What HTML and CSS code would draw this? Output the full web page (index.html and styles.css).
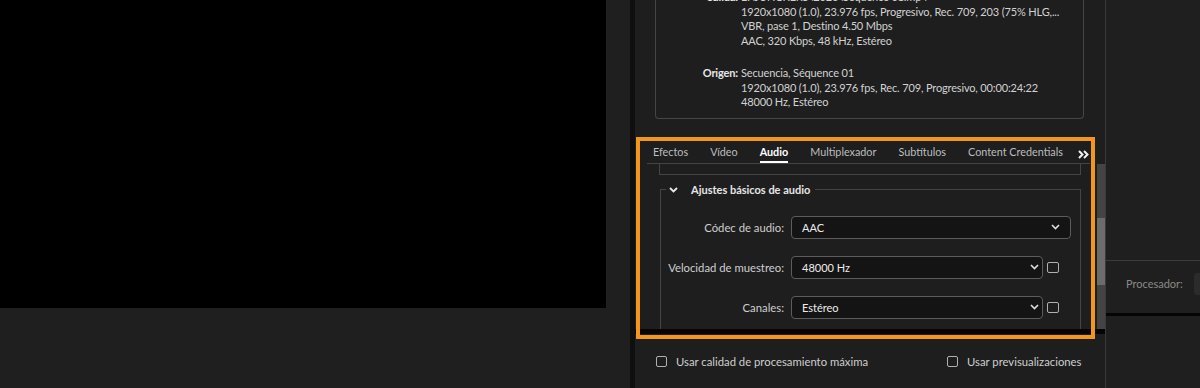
FILE: index.html
```html
<!DOCTYPE html>
<html lang="es">
<head>
  <meta charset="UTF-8">
  <title>Ajustes de exportación</title>
  <link rel="stylesheet" href="styles.css">
</head>
<body>
  <div class="viewer">
    <div class="video"></div>
  </div>
  <div class="gutter"></div>
  <div class="divider"></div>

  <div class="panel">
    <div class="summary">
      <div class="sum-group">
        <div class="sum-label">Salida:</div>
        <div class="sum-values">
          <p>E:\JUNCKERS\2026\Sequence 01.mp4</p>
          <p>1920x1080 (1.0), 23.976 fps, Progresivo, Rec. 709, 203 (75% HLG,...</p>
          <p>VBR, pase 1, Destino 4.50 Mbps</p>
          <p>AAC, 320 Kbps, 48 kHz, Estéreo</p>
        </div>
      </div>
      <div class="sum-group">
        <div class="sum-label">Origen:</div>
        <div class="sum-values">
          <p>Secuencia, Séquence 01</p>
          <p>1920x1080 (1.0), 23.976 fps, Rec. 709, Progresivo, 00:00:24:22</p>
          <p>48000 Hz, Estéreo</p>
        </div>
      </div>
    </div>

    <div class="tabs">
      <div class="tab"><span>Efectos</span></div>
      <div class="tab"><span>Vídeo</span></div>
      <div class="tab active"><span>Audio</span></div>
      <div class="tab"><span>Multiplexador</span></div>
      <div class="tab"><span>Subtítulos</span></div>
      <div class="tab"><span>Content Credentials</span></div>
      <div class="tab more">
        <svg width="11" height="9" viewBox="0 0 11 9"><path d="M1 1l3.5 3.5L1 8M6 1l3.5 3.5L6 8" fill="none" stroke="#f2f2f2" stroke-width="2"/></svg>
      </div>
    </div>

    <div class="scroll">
      <div class="scroll-content">
        <div class="prev-box"></div>
        <fieldset class="group">
          <legend>
            <svg class="chev" width="9" height="6" viewBox="0 0 9 6"><path d="M1 1l3.5 3.5L8 1" fill="none" stroke="#e8e8e8" stroke-width="1.8"/></svg>
            <span>Ajustes básicos de audio</span>
          </legend>
          <div class="rows">
            <div class="row">
              <label>Códec de audio:</label>
              <div class="field">
                <div class="select wide">
                  <span>AAC</span>
                  <svg width="9" height="6" viewBox="0 0 9 6"><path d="M1 1l3.5 3.5L8 1" fill="none" stroke="#e0e0e0" stroke-width="1.6"/></svg>
                </div>
              </div>
            </div>
            <div class="row">
              <label>Velocidad de muestreo:</label>
              <div class="field">
                <div class="select">
                  <span>48000 Hz</span>
                  <svg width="9" height="6" viewBox="0 0 9 6"><path d="M1 1l3.5 3.5L8 1" fill="none" stroke="#e0e0e0" stroke-width="1.6"/></svg>
                </div>
                <div class="check"></div>
              </div>
            </div>
            <div class="row">
              <label>Canales:</label>
              <div class="field">
                <div class="select">
                  <span>Estéreo</span>
                  <svg width="9" height="6" viewBox="0 0 9 6"><path d="M1 1l3.5 3.5L8 1" fill="none" stroke="#e0e0e0" stroke-width="1.6"/></svg>
                </div>
                <div class="check"></div>
              </div>
            </div>
          </div>
        </fieldset>
      </div>
      <div class="scrollbar">
        <div class="thumb"></div>
      </div>
    </div>

    <div class="separator"></div>

    <div class="options">
      <div class="option first"><div class="check"></div><span>Usar calidad de procesamiento máxima</span></div>
      <div class="option"><div class="check"></div><span>Usar previsualizaciones</span></div>
    </div>

    <div class="highlight"></div>
  </div>

  <div class="vline"></div>

  <div class="side">
    <div class="side-top"></div>
    <div class="side-row">
      <span>Procesador:</span>
      <div class="side-box"></div>
    </div>
    <div class="side-rest"></div>
  </div>
</body>
</html>
```

FILE: styles.css
```css
* {
  margin: 0;
  padding: 0;
  box-sizing: border-box;
}

body, html {
  width: 100%;
  height: 100%;
  overflow: hidden;
}

body {
  display: flex;
  background: #1f1f1f;
  font-family: Lato, "Noto Sans", sans-serif;
  font-size: 11px;
  color: #cfcfcf;
}

/* left monitor */
.viewer {
  width: 606px;
  flex: none;
}

.video {
  height: 308px;
  background: #000;
}

.gutter {
  width: 24px;
  flex: none;
}

.divider {
  width: 5px;
  flex: none;
  background: #0f0f0f;
}

/* export panel */
.panel {
  position: relative;
  width: 470px;
  flex: none;
  background: #1e1e1e;
  display: flex;
  flex-direction: column;
}

.summary {
  margin: -10px 0 0 20px;
  width: 429px;
  border: 1px solid #464646;
  border-top: none;
  border-radius: 0 0 4px 4px;
  padding-bottom: 8px;
  line-height: 14.5px;
  letter-spacing: -0.15px;
  color: #d2d2d2;
}

.sum-group {
  display: grid;
  grid-template-columns: 82px 1fr;
  column-gap: 3px;
}

.sum-group + .sum-group {
  margin-top: 18px;
}

.sum-label {
  text-align: right;
  font-weight: bold;
  color: #e6e6e6;
}

.sum-values p {
  white-space: nowrap;
}

.tabs {
  display: flex;
  gap: 22px;
  margin: 20px 15px 0 12px;
  padding-left: 6px;
  border-bottom: 1px solid #444;
  color: #bdbdbd;
  font-size: 10.8px;
}

.tab span {
  display: block;
  line-height: 16px;
  padding: 5px 0 1px;
  border-bottom: 2px solid transparent;
  white-space: nowrap;
}

.tab.active span {
  color: #fff;
  font-weight: bold;
  border-bottom-color: #fff;
}

.tab.more {
  margin-left: -7px;
  padding-top: 9px;
}

.scroll {
  display: flex;
  height: 166px;
  overflow: hidden;
}

.scroll-content {
  width: 462px;
  flex: none;
}

.prev-box {
  margin-left: 24px;
  width: 422px;
  height: 11px;
  border: 1px solid #444;
  border-top: none;
}

.group {
  margin: 7px 0 0 25px;
  width: 421px;
  min-width: 0;
  border: 1px solid #444;
  border-bottom: none;
  padding: 0;
  height: 200px;
}

.group legend {
  margin-left: 5px;
  padding: 0 5px 0 3px;
  display: flex;
  align-items: center;
  gap: 13px;
  line-height: 16px;
  font-weight: bold;
  color: #e6e6e6;
}

.rows {
  padding-top: 18px;
  display: flex;
  flex-direction: column;
  gap: 17px;
}

.row {
  display: grid;
  grid-template-columns: 123px 1fr;
  column-gap: 7px;
  align-items: center;
}

.row label {
  text-align: right;
  white-space: nowrap;
  font-size: 11.3px;
}

.field {
  display: flex;
  align-items: center;
  gap: 4px;
}

.select {
  width: 252px;
  height: 23px;
  display: flex;
  align-items: center;
  justify-content: space-between;
  padding: 0 3px 0 10px;
  background: #141414;
  border: 1px solid #5c5c5c;
  border-radius: 4px;
  color: #ececec;
}

.select.wide {
  width: 280px;
  padding-right: 10px;
}

.check {
  width: 12px;
  height: 11px;
  border: 1.5px solid #b0b0b0;
  border-radius: 2px;
  flex: none;
}

.scrollbar {
  width: 8px;
  background: #444;
  padding-top: 54px;
}

.thumb {
  height: 67px;
  background: #6c6c6c;
}

.separator {
  height: 5px;
  background: #050505;
}

.options {
  display: flex;
  align-items: center;
  height: 54px;
  padding-left: 21px;
}

.option {
  display: flex;
  align-items: center;
  gap: 9px;
  white-space: nowrap;
  font-size: 11.3px;
}

.option.first {
  width: 291px;
}

.option .check {
  width: 11px;
}

.highlight {
  position: absolute;
  left: 1px;
  top: 137px;
  width: 459px;
  height: 202px;
  border: 4px solid #f3961f;
}

.vline {
  width: 1px;
  flex: none;
  background: #3a3a3a;
}

/* right column */
.side {
  flex: 1;
  display: flex;
  flex-direction: column;
  overflow: hidden;
}

.side-top {
  height: 261px;
  border-bottom: 1px solid #3c3c3c;
}

.side-row {
  height: 52px;
  display: flex;
  align-items: flex-start;
  gap: 11px;
  padding: 15px 0 0 20px;
  color: #8a8a8a;
  line-height: 16px;
  white-space: nowrap;
}

.side-box {
  width: 40px;
  height: 22px;
  margin-top: -3px;
  background: #2b2b2b;
  border-radius: 3px;
  flex: none;
}

.side-rest {
  border-top: 3px solid #050505;
  flex: 1;
}
```
